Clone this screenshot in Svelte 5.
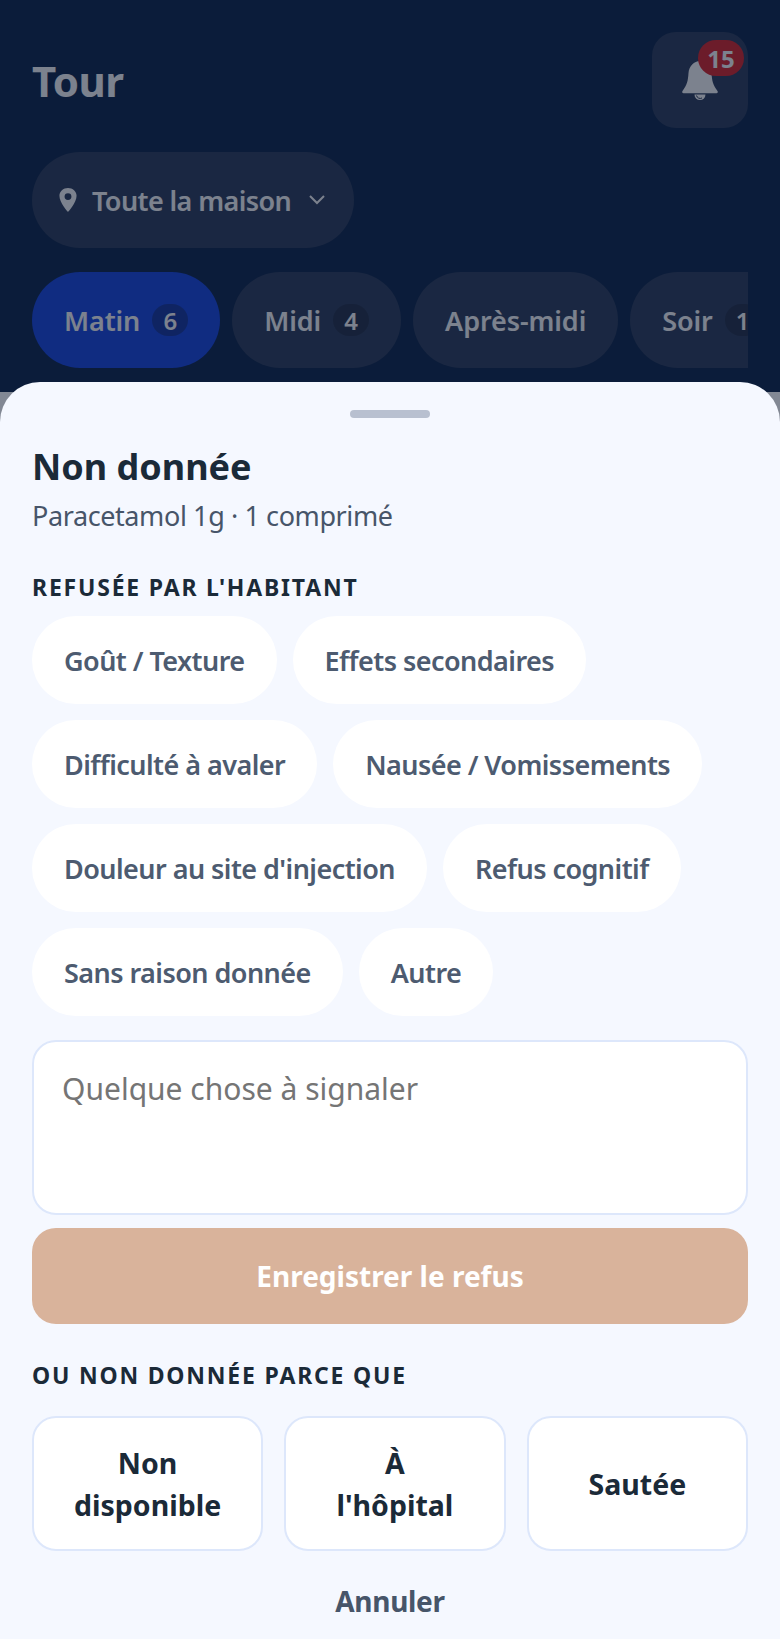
<script>
  const tabs = [
    { label: "Matin", count: 6, active: true },
    { label: "Midi", count: 4 },
    { label: "Après-midi" },
    { label: "Soir", count: 1 }
  ];
  const reasons = [
    "Goût / Texture",
    "Effets secondaires",
    "Difficulté à avaler",
    "Nausée / Vomissements",
    "Douleur au site d'injection",
    "Refus cognitif",
    "Sans raison donnée",
    "Autre"
  ];
  const others = ["Non disponible", "À l'hôpital", "Sautée"];
</script>

<div class="page">
  <header>
    <div class="top">
      <h1>Tour</h1>
      <button class="bell" aria-label="Notifications">
        <svg viewBox="0 0 40 40" width="40" height="40" fill="currentColor">
          <path d="M20 1c-6 0-11 5-11.500 12-.5 8-1.500 12-6 18-.7 1-.2 2.200 1 2.200h33c1.200 0 1.700-1.200 1-2.200-4.500-6-5.500-10-6-18C31 6 26 1 20 1z" />
          <path d="M14.500 34.500a5.500 5.500 0 0 0 11 0z" />
          <path d="M16.500 35.500a3.800 3.800 0 0 0 5.500 2.500" fill="none" stroke="#25375a" stroke-width="1" />
        </svg>
        <span class="badge">15</span>
      </button>
    </div>
    <button class="place">
      <svg viewBox="96 32 320 448" width="18" height="24" fill="currentColor">
        <path d="M256 32C168 32 96 97 96 176c0 128 160 304 160 304s160-176 160-304c0-79-72-144-160-144zm0 224a64 64 0 1 1 64-64 64 64 0 0 1-64 64z" />
      </svg>
      <span>Toute la maison</span>
      <svg class="chev" viewBox="0 0 16 10" width="16" height="10" fill="none" stroke="currentColor" stroke-width="2">
        <path d="M1 1l7 7 7-7" />
      </svg>
    </button>
    <div class="tabs">
      {#each tabs as tab}
        <button class="tab" class:active={tab.active}>
          {tab.label}
          {#if tab.count}<span class="count">{tab.count}</span>{/if}
        </button>
      {/each}
    </div>
  </header>
</div>

<div class="overlay"></div>

<section class="sheet">
  <div class="handle"></div>
  <h2>Non donnée</h2>
  <p class="sub">Paracetamol 1g · 1 comprimé</p>

  <h3 class="first">Refusée par l'habitant</h3>
  <div class="chips">
    {#each reasons as reason}
      <button class="chip">{reason}</button>
    {/each}
  </div>

  <textarea placeholder="Quelque chose à signaler"></textarea>
  <button class="save" disabled>Enregistrer le refus</button>

  <h3 class="second">Ou non donnée parce que</h3>
  <div class="cards">
    {#each others as other}
      <button class="card">{other}</button>
    {/each}
  </div>
  <button class="cancel">Annuler</button>
</section>

<style>
  :global(body) {
    background: #f5f8ff;
    font-family: "Noto Sans", "Open Sans", sans-serif;
  }
  .page {
    min-height: 1639px;
  }
  button {
    font: inherit;
    border: none;
    color: inherit;
  }
  header {
    background: #07214a;
    padding: 32px 32px 24px;
    height: 392px;
    box-sizing: border-box;
    color: #e8ecf2;
  }
  .top {
    display: flex;
    justify-content: space-between;
    align-items: center;
    margin-bottom: 24px;
  }
  h1 {
    margin: 0;
    font-size: 42px;
    font-weight: 700;
    letter-spacing: -0.5px;
  }
  .bell {
    position: relative;
    width: 96px;
    height: 96px;
    border-radius: 24px;
    background: #25375a;
    display: flex;
    align-items: center;
    justify-content: center;
    padding: 0;
  }
  .badge {
    position: absolute;
    top: 8px;
    right: 4px;
    width: 46px;
    height: 36px;
    border-radius: 18px;
    background: #c8202a;
    font-size: 24px;
    font-weight: 700;
    display: flex;
    align-items: center;
    justify-content: center;
  }
  .place {
    display: inline-flex;
    align-items: center;
    gap: 15px;
    height: 96px;
    padding: 0 29px 0 27px;
    border-radius: 48px;
    background: #25375a;
    font-size: 27px;
    font-weight: 600;
    letter-spacing: -0.6px;
  }
  .chev {
    margin-left: 3px;
  }
  .tabs {
    display: flex;
    gap: 12px;
    margin-top: 24px;
    overflow: hidden;
  }
  .tab {
    flex: none;
    display: flex;
    align-items: center;
    gap: 12px;
    height: 96px;
    padding: 0 32px;
    border-radius: 48px;
    background: #25375a;
    font-size: 27px;
    font-weight: 600;
    letter-spacing: -0.1px;
  }
  .tab.active {
    background: #1040d8;
  }
  .count {
    min-width: 36px;
    height: 32px;
    border-radius: 16px;
    background: rgba(15, 23, 42, 0.35);
    font-size: 24px;
    display: flex;
    align-items: center;
    justify-content: center;
  }
  .overlay {
    position: fixed;
    inset: 0;
    background: rgba(15, 23, 42, 0.5);
  }
  .sheet {
    position: fixed;
    left: 0;
    right: 0;
    bottom: 0;
    height: 1257px;
    box-sizing: border-box;
    padding: 0 32px;
    background: #f5f8ff;
    border-radius: 40px 40px 0 0;
    color: #1b2a38;
  }
  .handle {
    width: 80px;
    height: 8px;
    border-radius: 4px;
    background: #b8c0d0;
    margin: 28px auto 0;
  }
  h2 {
    margin: 24px 0 0;
    font-size: 36px;
    font-weight: 700;
    line-height: 50px;
  }
  .sub {
    margin: 4px 0 0;
    font-size: 27px;
    line-height: 40px;
    color: #475569;
    letter-spacing: -0.4px;
  }
  h3 {
    margin: 0;
    font-size: 23px;
    font-weight: 700;
    line-height: 32px;
    text-transform: uppercase;
    letter-spacing: 1.8px;
  }
  h3.first {
    margin-top: 35px;
  }
  .chips {
    display: flex;
    flex-wrap: wrap;
    gap: 16px;
    margin-top: 13px;
  }
  .chip {
    height: 88px;
    padding: 0 32px;
    border-radius: 44px;
    background: #fff;
    font-size: 27px;
    font-weight: 600;
    letter-spacing: -0.55px;
    color: #4d5b70;
  }
  textarea {
    display: block;
    width: 100%;
    height: 175px;
    box-sizing: border-box;
    margin-top: 24px;
    padding: 26px 28px;
    border: 2px solid #dde7fb;
    border-radius: 24px;
    background: #fff;
    font: inherit;
    font-size: 30px;
    resize: none;
    outline: none;
  }
  .save {
    display: block;
    width: 100%;
    height: 96px;
    margin-top: 13px;
    border-radius: 24px;
    background: #d9b39b;
    color: #fff;
    font-size: 28px;
    font-weight: 700;
  }
  h3.second {
    margin-top: 35px;
  }
  .cards {
    display: flex;
    gap: 21px;
    margin-top: 25px;
  }
  .card {
    flex: 1;
    height: 135px;
    padding: 0 40px;
    border: 2px solid #dde7fb;
    border-radius: 24px;
    background: #fff;
    font-size: 28.5px;
    font-weight: 700;
    line-height: 42px;
  }
  .cancel {
    display: block;
    margin: 30px auto 0;
    background: none;
    font-size: 28px;
    font-weight: 700;
    letter-spacing: -0.3px;
    color: #475569;
  }
</style>
